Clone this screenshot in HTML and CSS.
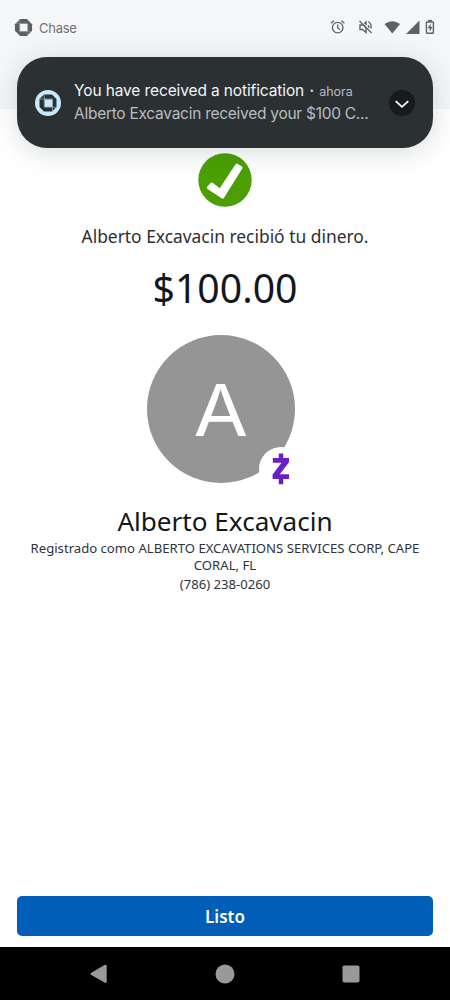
FILE: index.html
```html
<!DOCTYPE html>
<html lang="es">
<head>
<meta charset="utf-8">
<meta name="viewport" content="width=device-width, initial-scale=1">
<title>Chase</title>
<link rel="stylesheet" href="styles.css">
</head>
<body>
<div class="screen">
  <header class="header">
    <div class="status">
      <svg class="status-logo" viewBox="0 0 20 20"><path fill="#5c5e61" d="M6.500 1H13.500L19 6.500V13.500L13.500 19H6.500L1 13.500V6.500Z"/><path fill="#f4f5f8" d="M6 6H14.500V14H6Z"/><path d="M6 1.500V14M6 14.300H18.500M14.400 18.500V6M14 5.700H2" fill="none" stroke="#96989a" stroke-width=".7"/></svg>
      <span class="status-name">Chase</span>
      <svg class="status-icons" viewBox="0 0 106 20" fill="none" stroke="#5f6164">
        <circle cx="7.700" cy="10.600" r="5.300" stroke-width="1.300"/>
        <path d="M7.700 7.500v3.500l2.300 1.500M1 6.300l3-2.600M14.400 6.300l-3-2.600" stroke-width="1.300"/>
        <path d="M29.500 4l12 12" stroke-width="1.300"/>
        <path d="M30 8v4.500h2.500l3.500 3v-5l-3-2.500zM34.200 6.500l1.800-1.500v3M38 8.200q1.200 1 .8 2.800M38.200 4.500q3.700 2.200 2.800 7" stroke-width="1.400"/>
        <path d="M54.500 7q7.800-5.600 15.600 0l-7.800 9.400z" fill="#5f6164" stroke="none"/>
        <path d="M76 17L89.500 3.500V17z" fill="#5f6164" stroke="none"/>
        <rect x="96.400" y="5" width="7" height="11.300" rx=".7" stroke-width="1.400"/>
        <path d="M98 3.700h4" stroke-width="1.600"/>
        <path d="M100.700 6.700L97.600 11.300h2v3.300l3-4.700h-1.900z" fill="#5f6164" stroke="none"/>
      </svg>
    </div>
  </header>

  <section class="notification">
    <svg class="notification-logo" viewBox="0 0 26 26"><circle cx="13" cy="13" r="13" fill="#cae8fe"/><path fill="#2b3033" d="M9 4.500H17L21.500 9V17L17 21.500H9L4.500 17V9Z"/><path fill="#cae8fe" d="M9.500 9.300H17.500V17H9.500Z"/><path d="M9.300 4.500V17M9.300 17.200H21.500M17.500 21.500V9.300M17.500 9H4.500" fill="none" stroke="#91a6b5" stroke-width=".8"/></svg>
    <div class="notification-copy">
      <div class="notification-heading"><span class="notification-title">You have received a notification</span><span class="notification-dot">·</span><span class="notification-time">ahora</span></div>
      <div class="notification-body">Alberto Excavacin received your $100 C...</div>
    </div>
    <svg class="notification-toggle" viewBox="0 0 26 26"><circle cx="13" cy="13" r="13" fill="#171b1e"/><path d="M6.700 11.200l6.300 5.600 6.300-5.600" fill="none" stroke="#fff" stroke-width="1.800"/></svg>
  </section>

  <main class="content">
    <svg class="check" viewBox="0 0 54 54"><circle cx="27" cy="27" r="26.700" fill="#4b9f04"/><path d="M9 34L12.500 30Q13.500 29 14.600 29.800L21.800 35.300 37.500 11.200Q38.300 10 39.500 10.700L44 13.500Q45 14.300 44.300 15.500L26 44.700Q25 46.300 23.600 45.200L9.500 36Q8.200 35 9 34Z" fill="#fff"/></svg>
    <p class="message">Alberto Excavacin recibió tu dinero.</p>
    <p class="amount">$100.00</p>
    <div class="avatar">
      <span class="avatar-letter">A</span>
      <svg class="avatar-badge" viewBox="0 0 44 44"><circle cx="22" cy="22" r="22" fill="#fff"/><path d="M13.800 11H30V15.300L20.800 27.200H30V32H13.600V27.600L22.500 15.700H13.800ZM19.800 6.500h4.400V12h-4.400ZM19.800 31h4.400v6.300h-4.400Z" fill="#6b1fc9"/></svg>
    </div>
    <h1 class="name">Alberto Excavacin</h1>
    <p class="registered">Registrado como ALBERTO EXCAVATIONS SERVICES CORP, CAPE<br>CORAL, FL</p>
    <p class="phone">(786) 238-0260</p>
  </main>

  <button class="done">Listo</button>
  <nav class="navbar">
    <svg viewBox="0 0 20 20"><path d="M2.300 8.700L15.500 1Q17.700.2 17.700 2.500v14.800q0 2.300-2.200 1.300L2.300 10.900Q.5 9.800 2.300 8.700Z"/></svg>
    <svg viewBox="0 0 20 20"><circle cx="10" cy="10" r="9.500"/></svg>
    <svg viewBox="0 0 20 20"><rect x="1.500" y="1.500" width="17" height="17" rx="1.800"/></svg>
  </nav>
</div>
</body>
</html>
```

FILE: styles.css
```css
* { box-sizing: border-box; }
body, p, h1 { margin: 0; }

.screen {
  position: relative;
  display: flex;
  flex-direction: column;
  width: 450px;
  height: 1000px;
  overflow: hidden;
  background: #fff;
  color: #13171d;
  font-family: "Noto Sans", "Open Sans", sans-serif;
}

.header { height: 109px; background: #f5f6f8; }
.status { display: flex; align-items: center; height: 54px; padding: 0 14px 0 14px; }
.status-logo { width: 19px; height: 19px; }
.status-name {
  margin: 2px 0 0 6px;
  color: #707275;
  font: 400 13px/20px Inter, sans-serif;
  letter-spacing: -.25px;
}
.status-icons { width: 106px; height: 20px; margin-left: auto; }

.notification {
  position: absolute;
  top: 57px;
  left: 17px;
  display: flex;
  align-items: center;
  width: 416px;
  height: 91px;
  padding: 0 18px;
  border-radius: 30px;
  background: #2b3033;
  box-shadow: 0 4px 26px rgba(30, 40, 50, .17);
}
.notification-logo, .notification-toggle { flex: none; width: 26px; height: 26px; }
.notification-copy { flex: 1; padding: 0 0 2px 13px; font-family: Inter, sans-serif; white-space: nowrap; }
.notification-heading { display: flex; align-items: baseline; height: 23px; line-height: 23px; }
.notification-title { color: #f2f5f7; font-size: 15.500px; letter-spacing: -.12px; }
.notification-dot { width: 15px; color: #c5c8ca; text-align: center; font-size: 15px; font-weight: 700; }
.notification-time { color: #b9bdbf; font-size: 12.500px; }
.notification-body { height: 23px; color: #b9bdc0; font-size: 15.500px; letter-spacing: -.27px; line-height: 23px; }

.content { display: flex; flex: 1; flex-direction: column; align-items: center; padding-top: 44px; text-align: center; }
.check { flex: none; width: 54px; height: 54px; }
.message { margin-top: 17px; color: #2b2e33; font-size: 17.400px; line-height: 24px; }
.amount { margin-top: 16px; font-size: 39.200px; line-height: 48px; }
.avatar {
  position: relative;
  display: flex;
  align-items: center;
  justify-content: center;
  width: 148px;
  height: 148px;
  margin: 23px 8px 0 0;
  border-radius: 50%;
  background: #959595;
}
.avatar-letter { padding-top: 1px; color: #fff; font: 72px/80px Inter, sans-serif; transform: scaleX(1.1); }
.avatar-badge { position: absolute; top: 112px; left: 112px; width: 44px; height: 44px; }
.name { margin-top: 20px; font-size: 26.100px; font-weight: 400; line-height: 36px; }
.registered { margin-top: 1px; color: #30343a; font-size: 13.130px; line-height: 17px; }
.phone { margin-top: 2px; color: #30343a; font-size: 13.130px; line-height: 17px; }

.done {
  flex: none;
  height: 40px;
  margin: 0 17px 11px;
  padding: 1px 0 0;
  border: 0;
  border-radius: 5px;
  background: #005eb8;
  color: #fff;
  font: 600 17px/39px "Noto Sans", "Open Sans", sans-serif;
}
.navbar { display: flex; flex: none; align-items: center; justify-content: space-between; height: 53px; padding: 0 89px; background: #000; }
.navbar svg { width: 20px; height: 20px; fill: #999; }
```
